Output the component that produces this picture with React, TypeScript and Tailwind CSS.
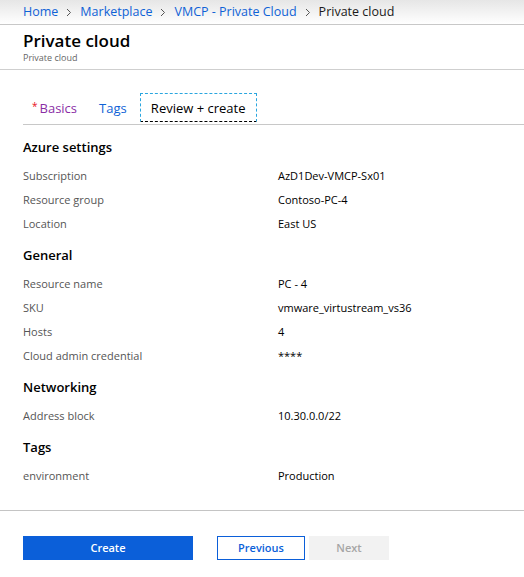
import { JSX } from 'react'

const sections: { title: string; rows: [string, string][] }[] = [
  {
    title: 'Azure settings',
    rows: [
      ['Subscription', 'AzD1Dev-VMCP-Sx01'],
      ['Resource group', 'Contoso-PC-4'],
      ['Location', 'East US'],
    ],
  },
  {
    title: 'General',
    rows: [
      ['Resource name', 'PC - 4'],
      ['SKU', 'vmware_virtustream_vs36'],
      ['Hosts', '4'],
      ['Cloud admin credential', '****'],
    ],
  },
  {
    title: 'Networking',
    rows: [['Address block', '10.30.0.0/22']],
  },
  {
    title: 'Tags',
    rows: [['environment', 'Production']],
  },
]

function Chevron(): JSX.Element {
  return (
    <svg width="6" height="9" viewBox="0 0 6 9" className="mx-[8px] mt-[1px]">
      <path d="M1 1l3.5 3.5L1 8" fill="none" stroke="#555" strokeWidth="1" />
    </svg>
  )
}

export default function App(): JSX.Element {
  return (
    <div className="w-[524px] h-[577px] bg-white text-[#1b1b1b] font-['Open_Sans','Noto_Sans',sans-serif] flex flex-col">
      <div className="h-[25px] shrink-0 flex items-center px-[23px] text-[12.5px] border-b border-[#c8c8c8] bg-gradient-to-b from-[#e6e6e6] to-white">
        <span className="text-[#0f62d6]">Home</span>
        <Chevron />
        <span className="text-[#0f62d6]">Marketplace</span>
        <Chevron />
        <span className="text-[#0f62d6]">VMCP - Private Cloud</span>
        <Chevron />
        <span className="text-[#1b1b1b]">Private cloud</span>
      </div>

      <div className="h-[45px] shrink-0 px-[23px] border-b border-[#cfcfcf] flex flex-col">
        <h1 className="text-[17px] font-semibold leading-[20px] mt-[6px] text-black">Private cloud</h1>
        <div className="text-[9px] leading-[12px] mt-[1px] text-[#666]">Private cloud</div>
      </div>

      <div className="shrink-0 ml-[23px] mt-[24px] flex items-end h-[31px] border-b border-[#c8c8c8] text-[13px]">
        <div className="flex items-center h-[28px] mb-[1px] pl-[9px] pr-[22px]">
          <span className="text-[#e81123] text-[10px] self-start mt-[4px] mr-[2px]">*</span>
          <span className="text-[#8a2da5]">Basics</span>
        </div>
        <div className="flex items-center h-[28px] mb-[1px] pr-[13px] text-[#0f62d6]">Tags</div>
        <div className="flex items-center justify-center pt-[2px] h-[29px] w-[117px] mb-[2px] border border-dashed border-t-[#2aa6df] border-l-[#2aa6df] border-r-[#2aa6df] border-b-black text-black">
          Review + create
        </div>
      </div>

      <div className="flex-1 px-[23px] pt-[11px]">
        {sections.map((s) => (
          <div key={s.title} className="mb-[8px]">
            <div className="h-[24px] flex items-center text-[13px] font-semibold text-black">{s.title}</div>
            <div className="pt-[4px]">
              {s.rows.map(([k, v]) => (
                <div key={k} className="h-[24px] flex items-center text-[11px]">
                  <span className="w-[255px] text-[#555]">{k}</span>
                  <span className="text-black">{v}</span>
                </div>
              ))}
            </div>
          </div>
        ))}
      </div>

      <div className="shrink-0 h-[67px] border-t border-[#c4c4c4] px-[23px] pt-[25px] flex items-start text-[11px] font-semibold">
        <button className="h-[24px] w-[170px] bg-[#0b5fd9] text-white">Create</button>
        <button className="ml-[24px] h-[24px] w-[88px] border border-[#0b5fd9] bg-white text-[#0b5fd9]">Previous</button>
        <button className="ml-[4px] h-[24px] w-[80px] bg-[#f2f2f2] text-[#a6a6a6]">Next</button>
      </div>
    </div>
  )
}
